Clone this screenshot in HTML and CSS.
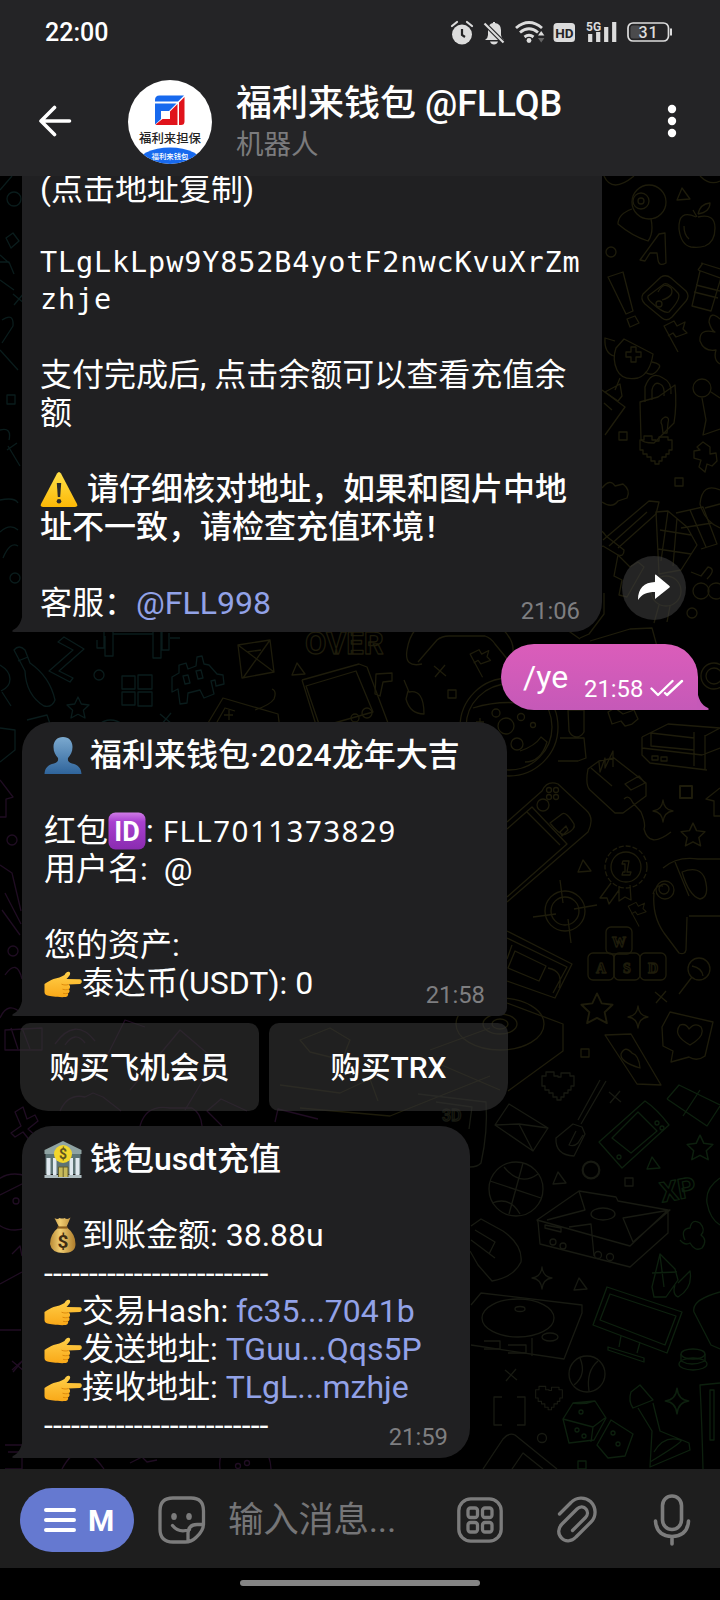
FILE: index.html
```html
<!DOCTYPE html>
<html lang="zh-CN">
<head>
<meta charset="utf-8">
<title>福利来钱包 @FLLQB</title>
<link rel="stylesheet" href="styles.css">
</head>
<body>
<svg class="defs" width="0" height="0" aria-hidden="true">
  <defs>
    <linearGradient id="skin" x1="0" y1="0" x2="0" y2="1"><stop offset="0" stop-color="#ffd04a"/><stop offset="1" stop-color="#f9a818"/></linearGradient>
    <linearGradient id="bust" x1="0" y1="0" x2="0" y2="1"><stop offset="0" stop-color="#7ba9cf"/><stop offset="1" stop-color="#2f649b"/></linearGradient>
    <linearGradient id="warn" x1="0" y1="0" x2="0" y2="1"><stop offset="0" stop-color="#ffe14a"/><stop offset="1" stop-color="#fcb806"/></linearGradient>
    <linearGradient id="violet" x1="0" y1="0" x2="0" y2="1"><stop offset="0" stop-color="#cf7be6"/><stop offset=".25" stop-color="#a840cf"/><stop offset="1" stop-color="#8a2bb0"/></linearGradient>
    <linearGradient id="sack" x1="0" y1="0" x2="1" y2="0"><stop offset="0" stop-color="#b98a35"/><stop offset=".4" stop-color="#f0cd72"/><stop offset="1" stop-color="#ae7c2b"/></linearGradient>
    <symbol id="point" viewBox="0 0 37 37">
      <path fill="url(#skin)" d="M0 18c3-2 6-4 9-5 4-1 8-2 11-4 1-2 3-4 5-3 2 2-1 5-3 7l13.500.2c2.400.3 2.400 4.500 0 4.800L24 18.500c2 1 2 3.500.5 4.700 1 1.500.6 3.300-1 4.100.6 2-.7 3.600-2.500 3.700C14 31.600 6 30 3 29.500 1 29 0 28 0 26Z"/>
      <path fill="none" stroke="#d98508" stroke-width=".9" d="M24 18.500c-2 .8-5 .6-7-.3M24.500 23.200c-2 .8-4.500.7-6.500 0M23.500 27.300c-2 .5-3.500.4-5 0"/>
    </symbol>
    <symbol id="star" viewBox="-12 -12 24 24"><path d="M0-11l3.300 7 7.700 1-5.600 5.300L7 10 0 6.300-7 10l1.600-7.700L-11-3l7.700-1Z"/></symbol>
    <symbol id="spark" viewBox="-12 -12 24 24"><path d="M0-11Q1-1 10 0 1 1 0 11-1 1-10 0-1-1 0-11Z"/></symbol>
    <symbol id="tri" viewBox="-12 -12 24 24"><path d="M-1-6L7 5-6 6Z"/></symbol>
    <symbol id="box" viewBox="-12 -12 24 24"><path d="M-4-4h8v8h-8Z"/></symbol>
    <symbol id="dot" viewBox="-12 -12 24 24"><circle r="5"/></symbol>
    <symbol id="cross" viewBox="-12 -12 24 24"><path d="M-6-5L6 5M5-6L-5 6"/></symbol>
    <symbol id="pixheart" viewBox="-18 -18 36 36"><path d="M0-9h3v-4h9v3h4V0h-3v4h-3v3H6v4H3v3H-1v-3h-4V7h-4V4h-4V0h-3v-10h4v-4h8v4h4Z"/></symbol>
    <symbol id="flag" viewBox="-18 -18 36 36"><path d="M4 16L-10-10l10-5 3 5 8-4-2 7 4 4-11 4-3-4-5 3"/></symbol>
  </defs>
</svg>

<main class="phone">
  <header class="top">
    <div class="status">
      <span class="clock">22:00</span>
      <svg class="status-icons" width="224" height="26" viewBox="0 0 224 26">
        <g fill="#dcdcdc">
          <circle cx="12" cy="14.500" r="10"/>
          <path d="M2 6l5-4M22 6l-5-4" stroke="#dcdcdc" stroke-width="2.200" stroke-linecap="round"/>
          <path d="M12 9v6l3 2" fill="none" stroke="#242426" stroke-width="2.200"/>
          <path d="M35 20q3-2 3-5V10q0-6 5-7V2h2v1q6 1 6 7v5q0 3 3 5ZM40 21.500h8q-1 3-4 3t-4-3Z"/>
          <path d="M33.500 2.500l20 20" stroke="#242426" stroke-width="4.500"/>
          <path d="M34.500 3.500l19 19" stroke="#dcdcdc" stroke-width="2.200"/>
        </g>
        <g fill="none" stroke="#dcdcdc" stroke-width="2.900">
          <path d="M66 8q13-11 26 0M70 12.500q9-7.500 18 0M74.500 17q4.500-3.500 9 0"/>
        </g>
        <circle cx="79" cy="20.500" r="2.400" fill="#dcdcdc"/>
        <path d="M88 15.500l3.200-4.500 3.200 4.500Z" fill="#dcdcdc"/><path d="M88 18l3.200 4.500 3.200-4.500Z" fill="#666"/>
        <rect x="103.500" y="3" width="21.500" height="19" rx="3.500" fill="#dcdcdc"/>
        <text x="114.300" y="17.700" class="hd">HD</text>
        <path d="M140.200 14v8M148.200 12v10M156.200 7v15M164.200 2v20" stroke="#dcdcdc" stroke-width="4.200" fill="none"/>
        <text x="136" y="10.800" class="fiveg">5G</text>
        <rect x="178" y="3" width="40.500" height="18" rx="5" fill="none" stroke="#dcdcdc" stroke-width="1.700"/>
        <rect x="180.500" y="5.500" width="10" height="13" rx="2.500" fill="#4b4b4d"/>
        <path d="M221 8.500v7" stroke="#dcdcdc" stroke-width="2"/>
        <text x="198.500" y="17.600" class="pct">31</text>
      </svg>
    </div>
    <div class="appbar">
      <svg class="back" width="34" height="32" viewBox="0 0 34 32"><path d="M31.500 16H3.500M16.500 2.500L3 16l13.500 13.500" fill="none" stroke="#fff" stroke-width="3.600" stroke-linecap="round" stroke-linejoin="round"/></svg>
      <svg class="avatar" width="84" height="84" viewBox="0 0 84 84">
        <clipPath id="round"><circle cx="42" cy="42" r="42"/></clipPath>
        <g clip-path="url(#round)">
          <rect width="84" height="84" fill="#fff"/>
          <path fill="#1769ee" d="M27 21.500V20q0-4.500 4.500-4.500H56l-6 6ZM27 23.500h21.500L41 31h-8v8l-6 5.500Z"/>
          <path fill="#e0131b" d="M56.500 17v24.500q0 3.500-3.500 3.500h-2V22.500ZM49.500 24v21H30.500q-2 0-3-.5l7-5.500H42v-7.500Z"/>
          <ellipse cx="42" cy="84" rx="33" ry="16.500" fill="#1769ee"/>
          <text x="42" y="63" class="logo-name">福利来担保</text>
          <text x="42" y="79" class="logo-sub">福利来钱包</text>
        </g>
      </svg>
      <div class="who"><h1>福利来钱包 @FLLQB</h1><p>机器人</p></div>
      <svg class="more" width="10" height="34" viewBox="0 0 10 34" fill="#fff"><circle cx="5" cy="5" r="4.200"/><circle cx="5" cy="17" r="4.200"/><circle cx="5" cy="29" r="4.200"/></svg>
    </div>
  </header>

  <section class="chat">
    <svg class="pattern" width="720" height="1293" viewBox="0 176 720 1293" aria-hidden="true">
      <g class="olive">
        <circle cx="649" cy="202" r="17"/><circle cx="641" cy="201" r="8"/><circle cx="641" cy="201" r="3"/><path d="M632 209q-14 5-14 15 14 12 30 17 6-8 3-22M604 176q8 18 30 0M700 176q10 10 20 5"/>
        <path d="M696 217q-18-8-17 12 2 16 12 18 8 1 14-1 10-4 10-18 0-15-17-11M697 217l-4-7M698 214q2-10 12-11 0 9-12 11M684 226q0 9 5 13"/>
        <path d="M640 260l19-26 6-1 1 30q-7 4-8-3l-1-7h-7l-5 8Z"/><circle cx="611" cy="252" r="5"/>
        <path d="M608 277l15-5 10 39-7 3ZM627 319l8-3 4 7-9 4ZM643 294l18-17q5-3 10 1l15 13q4 5 0 10l-14 16q-5 5-10 1l-17-14q-5-5-2-10Z"/>
        <path d="M648 296l16-12q4-2 14 9 4 5-9 19-5 2-17-9-5-4-4-7Z"/><path d="M658 292q6-11 13-4 4 8-9 12"/><circle cx="659" cy="304" r="3"/>
        <path d="M701 263l26 8M698 270l22 8M698 270l5-7M700 271l-8 35 19 5 12-40M696 285l24 6M694 292l24 6"/>
        <path d="M616 348l8-9 29 15q-3 20-15 24-16 3-21-8-5-11-1-22ZM614 356q-10-3-9-18l10 3M652 362q10 2 7 6-6 10-14 4M620 378l-5 12M605 392l15-8 2 12-4 5Z"/><path d="M626 352h5v-5h5v5h5v5h-5v5h-5v-5h-5Z"/>
        <path d="M720 319q-10-9-11 3 2 8 6 10-16-4-15 9 4 11 16 9-3 10 4 14"/>
        <path d="M640 402l18-5 17-12q2 20-1 38l-20 20q-12 0-13-4ZM645 402v-15q6-17 18-9 9 4 8 16M652 400v-10q2-9 8-6 5 2 4 12"/><path d="M662 425l1 8h4l1-10q2-6-3-6-6 3-3 8Z"/>
        <circle cx="702" cy="388" r="9"/><path d="M702 398l4 22-3 15 17-6M711 392l9 6M602 390l23 17-20 28M604 403l8 7"/>
        <path d="M602 488q8-10 13-2l8-2q8 6 4 14l-9 3q-6 8-16 1"/>
        <path d="M697 447l6-5 7 5v7l6-1 1 8-5 5-5-2-2 8-6-5 2-7-7-2v-7l6-1Z"/>
        <path d="M603 540l46-39 10 1-3 12-38 34M609 546l38-34M594 536q5-11 12 0l18 14q0 7-6 5l-15-9-17 9"/>
        <path d="M720 490q-18-8-20 14 5 18 20 24M705 508l15-4"/>
        <path d="M656 512l12-1 19 16 10 18-16 25-22 4ZM668 511l-7 50M677 518l-4 48M660 530l31 5M658 549l33 5M676 513l27-6 14 37-16 5M690 510l16 37M681 528l31-5"/>
        <path d="M618 555l12 12 8-5 6 5-17 30-8-2 3-15-8-4Z"/><circle cx="666" cy="591" r="15"/><path d="M659 605l-5 18M670 606l-3 16M691 572l10 4 7-9q9 2-1 12"/><circle cx="701" cy="591" r="8"/><circle cx="716" cy="591" r="8"/>
        <path d="M580 638l9-4 15-20v-21M590 641l40-12 22-1 6 22M560 625l20 14"/>
        <circle cx="714" cy="676" r="13"/><circle cx="714" cy="676" r="8"/>
        <path d="M422 664q-18 4-15-14 4-26 28-32l50-2q30 18 28 36M418 662l19-22q5-4 12-4h36q6 2 10 8l13 16"/>
        <path d="M302 680l57-16 8 3 21 56M302 680l15 48M306 686l50-15 17 41-53 15Z"/><circle cx="355" cy="718" r="4"/><circle cx="367" cy="713" r="5"/>
        <path d="M238 645l32-5 4 32-32 6ZM238 645l36 27M243 678l27-38M247 652l14-2"/>
        <path d="M205 728l18-30 55 16 2 15M217 722l8-14 10 3M224 715h9M229 710v10M255 710q15-5 19-11 3-8-2-10"/>
        <circle cx="509" cy="727" r="49"/><circle cx="509" cy="727" r="43"/><circle cx="506" cy="726" r="8"/><circle cx="496" cy="713" r="4"/><circle cx="521" cy="717" r="3.500"/><circle cx="533" cy="725" r="2.500"/><circle cx="517" cy="744" r="6"/><path d="M473 708q36-11 70 0M520 751q15-5 21-14l6 5q-6 20-22 20M480 718v9M476 722h8"/>
        <path d="M568 710h16v22q-3 5-8 5-5-1-7-6ZM560 738h24l2 20-8 3h-20"/>
        <path d="M642 737l26-13 52 4M642 737v18l8 8 57 7M642 748l60 7 18-7M694 732v34M705 735v35M651 733l43 5v12l-43-4ZM705 736l15-8M652 756h6v4h-6ZM661 757h6v4h-6Z"/>
        <path d="M588 769l11-8 15-3 32 25v13l-23 17h-8l-25-23q-5-5-2-21ZM599 762l1 10 5-14v10l8-17v16M591 768l21 18M625 784l14-8 6 7-14 7ZM624 799q5-5 9 4l8 9q5 12 3 17 5 20 27 3"/>
        <path d="M507 822l35-31q5-11 16-7l28 26q9 8 2 22l-81 70M507 829l25-22 35 37-60 53M527 812l33 33"/><path d="M550 823l12-9q4-3 12 10 2 5-8 10-5 3-16-11ZM560 832l6-6 2 4-6 6Z"/><circle cx="543" cy="805" r="6"/><circle cx="549" cy="790" r="2.500"/><circle cx="556" cy="790" r="2.500"/><circle cx="549" cy="797" r="2.500"/><circle cx="556" cy="797" r="2.500"/>
        <circle cx="626" cy="867" r="15"/><circle cx="626" cy="867" r="21" stroke-dasharray="5 2"/><path d="M611 883l-11 15h7l2 6 10-14M619 886v15l6-4 6 3-1-15"/><path d="M623 861h6l-2 11h4l-1 3h-8l1-3h2v-8h-3Z"/>
        <circle cx="565" cy="911" r="20"/><circle cx="565" cy="911" r="14"/><path d="M560 880l3 23M568 919l3 24M533 917l23-3M574 909l23-4"/>
        <rect x="606" y="927" width="26" height="27" rx="5"/><rect x="588" y="953" width="26" height="27" rx="5"/><rect x="614" y="953" width="26" height="27" rx="5"/><rect x="640" y="953" width="26" height="27" rx="5"/>
        <text x="612" y="947">W</text><text x="596" y="973">A</text><text x="623" y="973">S</text><text x="648" y="973">D</text>
        <path d="M507 931l65 33-17 34-48-17M512 945l-5 14M515 951l31 15-7 15-31-13ZM507 938l60 29-14 26M548 968q16 3 11 20"/>
        <path d="M663 868q14-12 35-9h22M653 894q3-10 10-8M654 893q-2 23 10 40l15 20q6 2 7-3l1-33M675 862l14 34M689 916h31M682 872q18-7 23 7 5 18-5 20-11-3-18-27Z"/><circle cx="665" cy="890" r="9"/><circle cx="664" cy="889" r="5"/>
        <circle cx="699" cy="969" r="11"/><path d="M692 977l-13 17M692 966q10 2 11 10"/>
        <path d="M662 1027l8-15 43 10-8 34q-8 6-16 1l-18 5 2-11-10-5ZM690 1045q-18-10-10-20 6-2 9 4 6-7 12-2 5 9-11 18Z"/>
        <path d="M605 1035l26-1 30 51-24-1ZM640 1068q-20-6-19-14 4-9 11-1 7 2 8 15Z"/>
        <path d="M507 1003l56 21v27l-55 40M300 1108l90 8 100-40M300 1040l30-12 20 12-8 20-32-8ZM280 1085l60 8 30-14 8 22M430 1050l60-22M430 1060l70 30"/><ellipse cx="500" cy="1024" rx="44" ry="26"/><ellipse cx="500" cy="1024" rx="17" ry="10"/><ellipse cx="500" cy="1024" rx="8" ry="5"/>
        <text class="word" x="305" y="654">OVER</text>
      </g>
      <g class="teal">
        <path d="M0 190l12-14M0 255l9 8M6 238l7-5 6 8-8 7ZM0 262h9l5 12M0 280l14 10M2 320q12-8 11 6l-11 17M0 350l18 20M7 395h8v9H7ZM0 430q12-3 9 10M7 450l10-7M8 446l12 20M0 500q15-3 18 3M0 532q10-9 18-2M3 558q7-17 15-12"/>
        <circle cx="14" cy="199" r="7"/><circle cx="15" cy="578" r="5"/>
        <path d="M14 650q5-6 11 0l5 13q20 14 25 37-3 8-11 6-18-11-19-35ZM18 661l10-4"/>
        <path d="M64 637l20 12-25 22 14 7-3 4-21-11 24-21-15-8ZM97 640v8h7v-22M105 636v20h8v-26M113 634h40M153 630v28h8v-26M162 630v20h7v-17M170 638h10"/>
        <path d="M122 676h13v13h-13ZM138 675h14v14h-14ZM122 692h13v13h-13ZM138 692h14v14h-14Z"/><circle cx="99" cy="675" r="5"/>
        <path d="M0 665q10 6 10 14t-9 12M2 692l9 14M0 728l15 2v20l-15 12M27 720l20-5 4 12M98 725q12-10 26 0"/>
        <path d="M172 677l7-4v-8l7-2 2 6 8-3 1-9 5-1 2 8 5 1 8 9 6 1 1 9-8 2-1-6-4 1 3 13-10 4-4-8-12 3-1 10-7 1-2-15-6 3ZM183 676l5-1 2 8-5 1ZM196 671l5-1 2 8-5 1Z"/>
      </g>
      <g class="purple">
        <path d="M0 780l13 17-7 2v18H0M0 865l12 8 9 38M5 893l16 31M2 910l18 25M5 975q12-17 17 4M0 1018q8-18 22-4"/>
        <path d="M5 1030l37-2v22H5ZM11 1028l7 21M22 1028l8 21M55 1044q20-28 40-3M65 1045q10-15 20-2M95 1080l30-60 20 7M130 1090l50-60 35 30-30 50"/>
        <path d="M15 1112l8-5 4 12 8-4 3 6-10 8 9 8-6 5-8-10-8 5-4-4 10-7ZM60 1111q8-18 25-14l8-4 10 4 18 14M140 1126q6-22 30-18h22q9 5 10 18M222 1126l-15-15 14-12 26 12"/>
        <circle cx="15" cy="1202" r="28"/><circle cx="16" cy="1201" r="3"/><path d="M0 1195l40-20M12 1254l8-8 2 10M0 1284l22-12M0 1330h21M12 1370l9-8M5 1445h17v24H5M8 1452h12M62 1469q18-34 42 0M220 1469q-3-23 20-26 30-2 31 26M130 1463l12-6 5 5 10-2"/>
        <circle cx="247" cy="1463" r="2.500"/><circle cx="238" cy="1466" r="2.500"/><path d="M275 1122l3-13 40 10"/>
      </g>
      <g class="dim">
        <path d="M418 1094l68 8q2 30-5 61-5 6-20 3M436 1102l36 5-3 22"/><text class="sans" x="442" y="1121">3D</text>
        <path d="M495 1125l14-21 39 24-15 23ZM495 1125l24-1 29 4M519 1124l14 27"/>
        <path d="M600 1080l-22 40M606 1081l-25 43M573 1124l9 3 3 7-11 22q-19-1-18-18ZM576 1131l-7 14q5 2 9-2l5-8"/>
        <circle cx="516" cy="1189" r="27"/><path d="M523 1163l-14 51M490 1181l51 17M504 1167q16 20 34 7M492 1203q18-7 28 11"/>
        <path d="M537 1220l42-29 37 6 2 4 50 9v23l-38 34-90-23-2-22ZM537 1220l93 26 38-36M579 1191l6 19-38 10M623 1218l47-8-37 32ZM569 1227l22-3 3 32M545 1225l16 3v4l-16-4Z"/><ellipse cx="603" cy="1214" rx="12" ry="6"/><circle cx="553" cy="1242" r="3"/><circle cx="563" cy="1246" r="3"/><circle cx="598" cy="1255" r="3.500"/><circle cx="610" cy="1257" r="3.500"/>
        <path d="M471 1226l10-7 22 12q20 14 18 31-7 15-29 19l-14-16-8-14M475 1230l20 12-6 12M471 1240l24 18"/>
        <path d="M471 1305l10-12 101 12v8l-18 46-93-14"/><ellipse cx="518" cy="1318" rx="36" ry="19"/><ellipse cx="520" cy="1309" rx="5" ry="2.500"/><ellipse cx="550" cy="1337" rx="8" ry="4"/><path d="M484 1341h16v8h-16M508 1345h18v8h-18M532 1338v18"/>
        <circle cx="587" cy="1374" r="18"/><path d="M580 1358q7 17-6 27M598 1361q-12 10-9 30"/>
        <path d="M502 1397h-8v28h8M517 1397h8v28h-8"/><circle cx="542" cy="1438" r="4.500"/><path d="M483 1469l20-30q6-7 12-4l42 34M512 1469l11-16 20 16"/>
      </g>
      <g class="green">
        <path d="M667 1099l12-14 41 20M667 1099l40 27 13-20M700 1090l-17 26"/>
        <path d="M599 1142l46-41q12 8 24 24l-47 43ZM612 1138l26-26 19 19-26 22Z"/><circle cx="657" cy="1123" r="2"/><circle cx="662" cy="1128" r="2"/><circle cx="619" cy="1157" r="2"/>
        <path d="M720 1178q-15 10-13 25 3 16 13 22M652 1287l8-33 15 15 3 11-12 17h-12ZM652 1273l25-1M660 1255l4 32M678 1283l12-12q3 17-12 26-6-3-3-12"/>
        <path d="M593 1325l14-38 75 25-15 41ZM600 1320l10-26 66 22-11 29ZM621 1336l-2 11M640 1342l-3 11M608 1347l36 11v4l-36-12Z"/>
        <path d="M720 1292q-29 8-26 20l17 33 9 4"/><ellipse cx="693" cy="1354" rx="12" ry="5"/><path d="M681 1354v7q10 6 24 0v-7"/><ellipse cx="693" cy="1364" rx="14" ry="6"/>
        <path d="M563 1419l10-16 22-2 11 17-12 22-25 3ZM563 1419l30 8 12-9M573 1403q12 2 22-2M593 1427l-2 15M597 1445l14-25 22 14-8 22-17 2Z"/><circle cx="577" cy="1430" r="2"/><circle cx="584" cy="1436" r="2"/><circle cx="581" cy="1412" r="2"/><circle cx="613" cy="1433" r="2"/><circle cx="618" cy="1444" r="2"/>
        <path d="M631 1392l9-7 13 15-20 8q-5-7-2-16ZM638 1408l14 23-2 36 40-17-1-7-29-12-7-28M654 1452q10-17 26-12 8-1-30 22"/><path d="M720 1383l-20 2q2 40 3 84M710 1390v50h4v-50Z"/>
        <text class="word xp" x="660" y="1200" transform="rotate(-10 675 1190)">XP</text>
      </g>
      <g class="olive">
        <use href="#tri" x="671" y="182" width="24" height="24"/><use href="#flag" x="656" y="318" width="36" height="36"/><use href="#box" x="611" y="424" width="24" height="24"/><use href="#pixheart" x="638" y="432" width="36" height="36"/><use href="#box" x="667" y="470" width="24" height="24"/><use href="#dot" x="680" y="601" width="24" height="24"/>
        <use href="#cross" x="428" y="659" width="24" height="24"/><use href="#flag" x="463" y="647" width="32" height="32"/><use href="#box" x="440" y="682" width="24" height="24"/><use href="#tri" x="286" y="657" width="24" height="24"/>
        <path d="M376 674l16-1v8l-9 1-3 14-5-2ZM404 680l5 12q15-3 15 22-14 0-18-15l2-8M608 712l7-4 8 6 11-4 4 9-6 5-7 2-4-5-9 3Z"/>
        <use href="#box" x="668" y="774" width="36" height="36"/><use href="#spark" x="651" y="799" width="24" height="24"/><use href="#star" x="680" y="822" width="26" height="26"/><use href="#tri" x="572" y="854" width="24" height="24"/><use href="#flag" x="622" y="900" width="28" height="28"/><use href="#star" x="580" y="992" width="34" height="34"/><use href="#spark" x="626" y="1005" width="24" height="24"/><use href="#cross" x="649" y="985" width="24" height="24"/><use href="#box" x="573" y="1041" width="24" height="24"/><path d="M720 788l-14 11 8 2v15h6"/>
      </g>
      <g class="teal"><use href="#star" x="66" y="696" width="24" height="24"/><use href="#cross" x="7" y="287" width="24" height="24"/><use href="#cross" x="154" y="707" width="24" height="24"/></g>
      <g class="purple"><use href="#dot" x="0" y="828" width="24" height="24"/><use href="#dot" x="1" y="939" width="24" height="24"/><use href="#cross" x="6" y="1354" width="24" height="24"/></g>
      <g class="dim"><use href="#pixheart" x="540" y="1068" width="36" height="36"/><use href="#cross" x="603" y="1085" width="24" height="24"/><use href="#tri" x="547" y="1166" width="24" height="24"/><use href="#dot" x="571" y="1150" width="40" height="40"/><use href="#box" x="617" y="1170" width="24" height="24"/><use href="#spark" x="530" y="1266" width="24" height="24"/><use href="#tri" x="568" y="1272" width="24" height="24"/><use href="#cross" x="499" y="1363" width="24" height="24"/><use href="#pixheart" x="534" y="1383" width="30" height="30"/></g>
      <g class="green"><use href="#star" x="686" y="1134" width="28" height="28"/><use href="#tri" x="641" y="1151" width="24" height="24"/><use href="#spark" x="663" y="1387" width="28" height="28"/><use href="#box" x="570" y="1453" width="24" height="24"/><path d="M685 1240q-5-11 5-12 2-10 10-5 6 7 1 12 7 5 1 13-7 4-12-5-5 3-10-3"/></g>
    </svg>

    <div class="row first-row">
      <article class="bubble in m1">
        <div class="line">(点击地址复制)</div>
        <div class="line gap short"></div>
        <div class="line mono">TLgLkLpw9Y852B4yotF2nwcKvuXrZm</div>
        <div class="line mono">zhje</div>
        <div class="line gap"></div>
        <div class="line">支付完成后, 点击余额可以查看充值余</div>
        <div class="line">额</div>
        <div class="line gap"></div>
        <div class="line strong"><svg class="emoji" width="39" height="37" viewBox="0 0 38 37"><path d="M16.500 2.500q2-3 4 0L36.500 33q1 3-2 3H2.500q-3 0-2-3Z" fill="url(#warn)"/><path d="M16.300 12h4.400l-1 14h-2.400Z" fill="#2b2b2b"/><circle cx="18.500" cy="30.200" r="2.300" fill="#2b2b2b"/></svg> 请仔细核对地址，如果和图片中地</div>
        <div class="line strong">址不一致，请检查充值环境<span class="bang">!</span></div>
        <div class="line gap"></div>
        <div class="line">客服：<a>@FLL998</a></div>
        <time>21:06</time>
        <svg class="tail" width="11" height="22" viewBox="0 0 11 22"><path d="M11 0Q10 16 1 20q-2 2 1 2h9Z" fill="#202022"/></svg>
      </article>
      <button class="share"><svg width="34" height="28" viewBox="0 0 34 28"><path d="M18 1.500v6.500C7 8.500 1 14 1 26c4-6 9-8 17-8v7l14.500-11.500q.8-.8 0-1.600L19 .8q-1-.6-1 .7Z" fill="#fff"/></svg></button>
    </div>

    <article class="bubble out">
      <span class="out-text">/ye</span><time>21:58</time>
      <svg class="ticks" width="34" height="18" viewBox="0 0 34 18"><path d="M1.500 9.500l6.500 6.500L22.500 2M15 14l2 2L32 2" fill="none" stroke="#fff" stroke-width="2.400" stroke-linecap="round" stroke-linejoin="round"/></svg>
      <svg class="tail" width="12" height="22" viewBox="0 0 12 22"><path d="M0 0Q1 16 11 20q2 2-1 2H0Z" fill="#c559b8"/></svg>
    </article>

    <article class="bubble in m2">
      <div class="line strong"><svg class="emoji" width="38" height="37" viewBox="0 0 37 37"><path d="M18.500 0c6 0 9.500 4 9.500 10 0 5-2 8-4.500 11-.5 3 .5 4.500 4 5.500 6 1.500 9 4 9.500 10.500H0c.5-6.500 3.500-9 9.500-10.500 3.500-1 4.500-2.500 4-5.500C11 18 9 15 9 10 9 4 12.500 0 18.500 0Z" fill="url(#bust)"/></svg> 福利来钱包·2024龙年大吉</div>
      <div class="line gap"></div>
      <div class="line">红包<svg class="emoji" width="38" height="38" viewBox="0 0 38 38"><rect x=".5" y=".5" width="37" height="37" rx="7" fill="url(#violet)"/><text x="19" y="29" class="id-mark">ID</text></svg>: <span class="spaced">FLL7011373829</span></div>
      <div class="line">用户名:  @</div>
      <div class="line gap"></div>
      <div class="line">您的资产:</div>
      <div class="line"><svg class="emoji low" width="38" height="37"><use href="#point"/></svg>泰达币(USDT): 0</div>
      <time>21:58</time>
      <svg class="tail" width="11" height="22" viewBox="0 0 11 22"><path d="M11 0Q10 16 1 20q-2 2 1 2h9Z" fill="#202022"/></svg>
    </article>

    <div class="keys"><button class="left">购买飞机会员</button><button class="right">购买TRX</button></div>

    <article class="bubble in m3">
      <div class="line strong"><svg class="emoji" width="38" height="37" viewBox="0 0 37 37"><path fill="#8fa3a3" d="M0 9L18.500 0 37 9v4H0Z"/><path fill="#5d7375" d="M1 13h35v20H1Z"/><path fill="#dfe8ef" d="M2 17h4v17H2ZM8.500 17h3.500v17H8.500ZM25 17h3.500v17H25ZM31 17h4v17h-4Z"/><path fill="#aebcc0" d="M0 34h37v3H0Z"/><path fill="#c6b95a" d="M14 26h9.500v10H14Z"/><path d="M18.700 26v10M14 26h9.500v10M14 36V26" stroke="#655f2d" fill="none"/><circle cx="18.500" cy="13" r="9" fill="#f2d62c"/><text x="18.500" y="18.200" class="coin">$</text></svg> 钱包usdt充值</div>
      <div class="line gap"></div>
      <div class="line"><svg class="emoji" width="38" height="37" viewBox="0 0 37 37"><path fill="url(#sack)" d="M10 1q3 2 5 0 3 1 5 0 3 2 6-.5l-4 9.500q9 7 9 17 0 9-12 9T5.500 27q0-10 9-17Z"/><path d="M13 10.500h10" stroke="#8d5f1f" stroke-width="2.200"/><text x="18.500" y="31" class="dollar">$</text></svg>到账金额: 38.88u</div>
      <div class="line dashes">-------------------------</div>
      <div class="line"><svg class="emoji low" width="38" height="37"><use href="#point"/></svg>交易Hash: <a>fc35...7041b</a></div>
      <div class="line"><svg class="emoji low" width="38" height="37"><use href="#point"/></svg>发送地址: <a>TGuu...Qqs5P</a></div>
      <div class="line"><svg class="emoji low" width="38" height="37"><use href="#point"/></svg>接收地址: <a>TLgL...mzhje</a></div>
      <div class="line dashes">-------------------------</div>
      <time>21:59</time>
      <svg class="tail" width="11" height="22" viewBox="0 0 11 22"><path d="M11 0Q10 16 1 20q-2 2 1 2h9Z" fill="#202022"/></svg>
    </article>
  </section>

  <footer class="composer">
    <button class="menu"><svg width="32" height="26" viewBox="0 0 32 26"><path d="M2 3h28M2 13h28M2 23h28" stroke="#fff" stroke-width="4" stroke-linecap="round"/></svg><span>M</span></button>
    <svg class="sticker" width="48" height="48" viewBox="0 0 48 48" fill="none" stroke="#7c7c7c" stroke-width="3.300" stroke-linecap="round"><path d="M45.500 28V15Q45.500 2 33 2H15Q2 2 2 15v18q0 13 13 13h12c5 0 8-1.500 11-4.500 4.500-4 7.500-7.500 7.500-13.500ZM45 28.500h-6q-8.500 0-9 8.500v8M14.500 29.500q6.500 8 17 4"/><ellipse cx="16" cy="20.500" rx="2.800" ry="3.500" fill="#7c7c7c" stroke="none"/><ellipse cx="31" cy="20.500" rx="2.800" ry="3.500" fill="#7c7c7c" stroke="none"/></svg>
    <span class="hint">输入消息...</span>
    <svg class="apps" width="46" height="46" viewBox="0 0 46 46" fill="none" stroke="#7c7c7c" stroke-width="3.300"><rect x="1.800" y="1.800" width="42.400" height="42.400" rx="12"/><rect x="11" y="11" width="9.500" height="9.500" rx="2.500"/><rect x="25.500" y="11" width="9.500" height="9.500" rx="2.500"/><rect x="11" y="25.500" width="9.500" height="9.500" rx="2.500"/><rect x="25.500" y="25.500" width="9.500" height="9.500" rx="2.500"/></svg>
    <svg class="clip" width="42" height="48" viewBox="0 0 42 48" fill="none" stroke="#7c7c7c" stroke-width="3.300" stroke-linecap="round"><path d="M3.500 18L15 6.500C20 1 29 .5 34.500 5.500c6 6 6 15 .5 20.500L20 41c-4.500 5-11 5-14.500 1-4-4-3.500-10 .5-14l15-15c3-3 7-2.500 9 0 2 2.500 2 6-.5 8.500L16.500 34.500"/></svg>
    <svg class="mic" width="38" height="52" viewBox="0 0 38 52" fill="none" stroke="#7c7c7c" stroke-width="3.600" stroke-linecap="round"><rect x="9.500" y="2" width="19" height="33.500" rx="9.500"/><path d="M2.500 27q1 15 16.500 15.500Q34.500 42 35.500 27M19 43v7"/></svg>
  </footer>
  <div class="nav"><i></i></div>
</main>
</body>
</html>
```

FILE: styles.css
```css
* { box-sizing: border-box; }
body { margin: 0; background: #000; font-family: Roboto, "Noto Sans CJK SC", sans-serif; color: #fff; }
svg { display: block; flex: none; }
button { border: 0; padding: 0; margin: 0; font: inherit; color: inherit; }
.defs { position: absolute; }
.phone { width: 720px; height: 1600px; display: flex; flex-direction: column; overflow: hidden; }

.top { height: 176px; background: #242426; flex: none; position: relative; z-index: 2; }
.status { height: 65px; padding: 0 46px 0 45px; display: flex; align-items: center; justify-content: space-between; }
.clock { font-size: 25px; font-weight: 500; }
.status-icons { font-family: Roboto, sans-serif; }
.hd { font-size: 13.500px; font-weight: 700; text-anchor: middle; fill: #242426; }
.fiveg { font-size: 12px; font-weight: 700; fill: #dcdcdc; stroke: #242426; stroke-width: 1px; paint-order: stroke; }
.pct { font-size: 16px; font-weight: 500; text-anchor: middle; fill: #dcdcdc; letter-spacing: 1px; }
.appbar { height: 111px; padding: 0 43px 0 38px; display: flex; align-items: center; }
.avatar { margin-left: 56px; margin-top: 2px; }
.logo-name { font: 500 12.400px "Noto Sans CJK SC", sans-serif; text-anchor: middle; fill: #222; }
.logo-sub { font: 500 7.400px "Noto Sans CJK SC", sans-serif; text-anchor: middle; fill: #fff; }
.who { margin-left: 24px; flex: 1; padding-top: 3px; }
.who h1 { margin: 0; font-size: 36px; font-weight: 500; line-height: 44px; white-space: nowrap; }
.who p { margin: 0; font-size: 27.500px; line-height: 37px; color: #7b7b7d; }

.chat { height: 1293px; flex: none; position: relative; overflow: hidden; display: flex; flex-direction: column; align-items: flex-start; }
.pattern { position: absolute; inset: 0; fill: none; stroke-width: 1.300; stroke-linejoin: round; }
.pattern text { font: 700 14px "Liberation Serif", serif; }
.pattern .sans { font: 500 16px Roboto, sans-serif; }
.pattern .word { font: 700 31px Roboto, sans-serif; }
.pattern .xp { font-size: 28px; }
.olive { stroke: #1e1c0b; }
.teal { stroke: #0a1c1c; }
.purple { stroke: #200d23; }
.dim { stroke: #181a12; }
.green { stroke: #0d200e; }

.row, .bubble, .keys { position: relative; z-index: 1; }
.row { display: flex; align-items: flex-end; height: 456px; margin-bottom: 12px; }
.bubble.in { background: #202022; margin-left: 22px; display: flex; flex-direction: column; }
.line { height: 38px; line-height: 38px; font-size: 32px; display: flex; align-items: center; white-space: pre; flex: none; }
.short { height: 37px; }
.line.mono { height: 36.500px; font-family: "DejaVu Sans Mono", monospace; font-size: 28.500px; letter-spacing: .86px; }
.strong { font-weight: 500; }
.bang { padding-left: 3px; }
.dashes { letter-spacing: .14px; }
.line a { color: #92a2e8; }
.spaced { font-family: "Noto Sans", sans-serif; font-size: 29.500px; letter-spacing: 1.450px; padding-left: 1px; }
.low { position: relative; top: 1px; }
.id-mark { font: 700 27px Roboto, sans-serif; text-anchor: middle; fill: #fff; }
.coin { font: 700 14px Roboto, sans-serif; text-anchor: middle; fill: #5e5520; }
.dollar { font: 700 19px Roboto, sans-serif; text-anchor: middle; fill: #3f2c12; }
.bubble.in time { position: absolute; right: 22px; bottom: 7px; font-size: 23.800px; line-height: 28px; color: #7e7e80; }
.tail { position: absolute; bottom: 0; }
.in .tail { left: -10px; }
.m1 { width: 580px; height: 456px; justify-content: flex-end; padding: 0 0 10px 18px; border-radius: 0 0 30px 0; }
.share { margin: 0 0 12px 20px; width: 64px; height: 64px; border-radius: 50%; background: rgba(60,60,60,.6); display: flex; align-items: center; justify-content: center; }

.out { align-self: flex-end; width: 197px; height: 66px; margin: 0 22px 12px 0; padding: 0 14px 0 22px; border-radius: 33px 33px 0 33px; background: linear-gradient(#db5dba, #c559b8); display: flex; align-items: center; }
.out-text { font-size: 32px; }
.out time { font-size: 23.800px; margin: 23px 0 0 16px; }
.ticks { margin: 22px 0 0 7px; }
.out .tail { right: -11px; }

.m2 { width: 485px; height: 294px; padding: 14px 0 0 22px; border-radius: 30px 30px 8px 0; }
.keys { margin: 7px 0 15px 20px; display: flex; gap: 10px; }
.keys button { width: 239px; height: 88px; padding-bottom: 5px; background: rgba(52,52,52,.62); font-size: 30px; font-weight: 500; border-radius: 10px; }
.keys .left { border-bottom-left-radius: 28px; }
.keys .right { border-bottom-right-radius: 28px; }
.m3 { width: 448px; height: 332px; padding: 14px 0 0 22px; border-radius: 30px 30px 30px 0; }

.composer { height: 99px; flex: none; background: #1e1e1e; display: flex; align-items: center; padding: 0 29px 0 20px; }
.menu { width: 114px; height: 64px; border-radius: 32px; background: #6579d0; display: flex; align-items: center; gap: 12px; padding: 0 0 0 24px; font-size: 30px; font-weight: 700; margin-top: 3px; }
.sticker { margin: 3px 0 0 24px; }
.hint { margin-left: 22px; width: 229px; padding-bottom: 4px; font-size: 35.500px; letter-spacing: -.3px; color: #757577; white-space: nowrap; }
.apps { margin-top: 3px; }
.clip { margin: 3px 0 0 53px; }
.mic { margin: 3px 0 0 auto; }
.nav { flex: 1; display: flex; justify-content: center; padding-top: 12px; }
.nav i { width: 240px; height: 6px; border-radius: 3px; background: #848484; }
```
